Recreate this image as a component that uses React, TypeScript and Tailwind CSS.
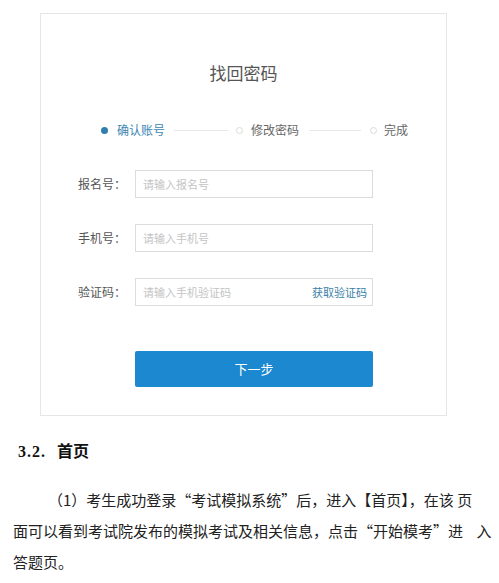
import React from "react";

const sans = { fontFamily: '"Noto Sans CJK SC", "Noto Sans", sans-serif' };

function Row({ label, placeholder, extra }: { label: string; placeholder: string; extra?: string }) {
  return (
    <div className="flex items-center">
      <div className="w-[94px] pl-[37px] text-[12px] text-[#555] leading-[16px]">{label}</div>
      <div className="flex items-center justify-between w-[238px] h-[28px] border border-[#dcdcdc] pl-[7px] pr-[5px]">
        <span className="text-[11px] text-[#c4c4c4] leading-[14px]">{placeholder}</span>
        {extra && <span className="text-[11px] text-[#3a7fa6] leading-[14px]">{extra}</span>}
      </div>
    </div>
  );
}

export default function App() {
  return (
    <div className="w-[499px] h-[583px] bg-white overflow-hidden" style={sans}>
      <div className="pt-[13px]">
        <div className="ml-[40px] w-[407px] h-[403px] border border-[#e6e6e6] bg-white">
          <div className="pt-[47px] text-center text-[17px] leading-[24px] text-[#555]">找回密码</div>
          <div className="mt-[37px] flex items-center pl-[60px] h-[16px] text-[12px] leading-[16px]">
            <span className="w-[7px] h-[7px] rounded-full bg-[#2f7fae]" />
            <span className="ml-[9px] text-[#3d86b3]">确认账号</span>
            <span className="ml-[9px] w-[54px] h-px bg-[#e8e8e8]" />
            <span className="ml-[8px] w-[7px] h-[7px] rounded-full border border-[#dadada]" />
            <span className="ml-[8px] text-[#666]">修改密码</span>
            <span className="ml-[10px] w-[52px] h-px bg-[#e8e8e8]" />
            <span className="ml-[9px] w-[7px] h-[7px] rounded-full border border-[#dadada]" />
            <span className="ml-[7px] text-[#666]">完成</span>
          </div>
          <div className="mt-[32px] flex flex-col gap-[26px]">
            <Row label="报名号：" placeholder="请输入报名号" />
            <Row label="手机号：" placeholder="请输入手机号" />
            <Row label="验证码：" placeholder="请输入手机验证码" extra="获取验证码" />
          </div>
          <div className="mt-[45px] ml-[94px] w-[238px] h-[36px] rounded-[2px] bg-[#1b88d0] flex items-center justify-center text-white text-[13px]">
            下一步
          </div>
        </div>
      </div>
      <div
        className="mt-[25px] pl-[18px] flex items-center text-[16px] leading-[22px] font-bold text-[#111]"
        style={{ fontFamily: '"Liberation Serif", "Noto Sans CJK SC", serif' }}
      >
        <span className="tracking-[1px]">3.2.</span>
        <span className="ml-[11px]">首页</span>
      </div>
      <div className="mt-[21px] pl-[13px] text-[15px] leading-[31px] text-[#222]">
        <div className="pl-[35px] whitespace-nowrap">（1）考生成功登录“考试模拟系统”后，进入【首页】，在该 页</div>
        <div className="whitespace-nowrap">面可以看到考试院发布的模拟考试及相关信息，点击“开始模考”进&nbsp;&nbsp;&nbsp;&nbsp;入</div>
        <div className="whitespace-nowrap">答题页。</div>
      </div>
    </div>
  );
}
